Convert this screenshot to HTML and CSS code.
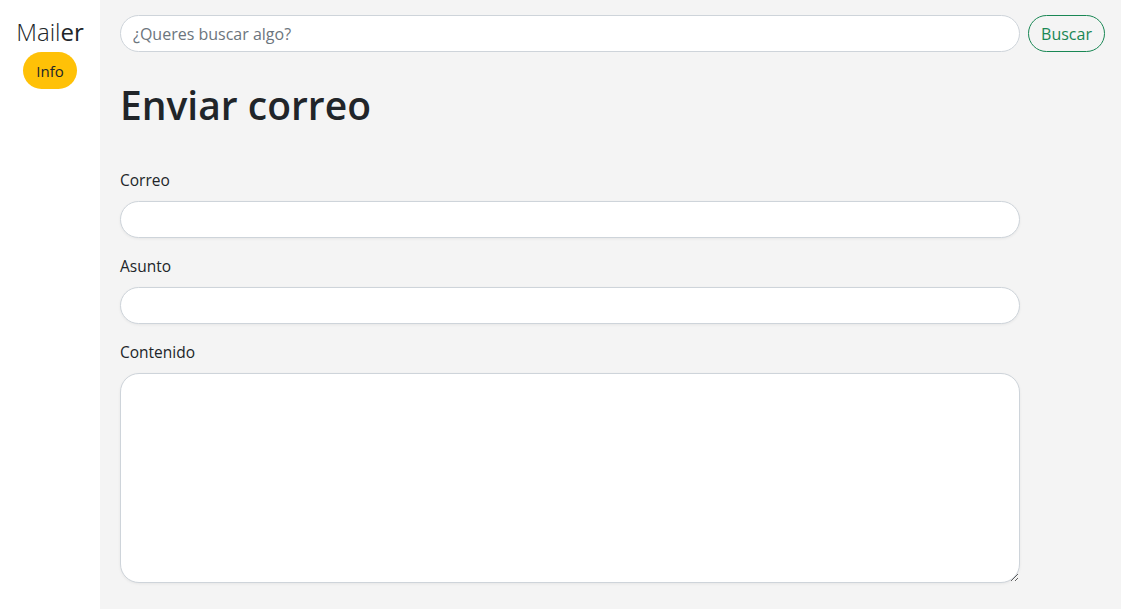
FILE: index.html
```html
<!DOCTYPE html>
<html lang="es">
<head>
<meta charset="utf-8">
<title>Mailer</title>
<link rel="stylesheet" href="styles.css">
</head>
<body>
<div class="app">
  <aside class="sidebar">
    <div class="brand">Mail<b>er</b></div>
    <span class="badge">Info</span>
  </aside>
  <main class="main">
    <form class="search">
      <input class="search-input" type="text" placeholder="¿Queres buscar algo?">
      <button class="btn-outline" type="button">Buscar</button>
    </form>
    <h1 class="title">Enviar correo</h1>
    <div class="field">
      <label class="label">Correo</label>
      <input class="control" type="text">
    </div>
    <div class="field">
      <label class="label">Asunto</label>
      <input class="control" type="text">
    </div>
    <div class="field">
      <label class="label">Contenido</label>
      <textarea class="control area"></textarea>
    </div>
  </main>
</div>
</body>
</html>
```
FILE: styles.css
```css
* { box-sizing: border-box; }
html, body { margin: 0; height: 100%; }
body {
  font-family: "Open Sans", Lato, sans-serif;
  color: #212529;
  background: #f4f4f4;
}
.app { display: flex; min-height: 100%; }
.sidebar {
  width: 100px;
  flex: 0 0 100px;
  background: #fff;
  display: flex;
  flex-direction: column;
  align-items: center;
  padding-top: 17px;
}
.brand {
  font-size: 24px;
  font-weight: 300;
  line-height: 30px;
  color: #212529;
}
.brand b { font-weight: 400; }
.badge {
  margin-top: 5px;
  width: 54px;
  height: 37px;
  border-radius: 19px;
  background: #ffc107;
  display: flex;
  align-items: center;
  justify-content: center;
  font-size: 15px;
  font-weight: 400;
  color: #212529;
}
.main {
  flex: 1;
  padding: 15px 16px 0 20px;
}
.search { display: flex; gap: 8px; }
.search-input {
  width: 900px;
  height: 37px;
  border: 1px solid #ced4da;
  border-radius: 19px;
  background: #fff;
  padding: 0 12px;
  font-family: inherit;
  font-size: 16px;
  font-weight: 400;
}
.search-input::placeholder { color: #6c757d; }
.btn-outline {
  width: 77px;
  height: 37px;
  border: 1px solid #198754;
  border-radius: 19px;
  background: transparent;
  color: #198754;
  font-family: inherit;
  font-size: 16px;
  font-weight: 400;
  padding: 0;
}
.title {
  margin: 29px 0 39px;
  font-size: 39px;
  line-height: 48px;
  font-weight: 600;
  color: #212529;
}
.field { margin-bottom: 16px; width: 900px; }
.label {
  display: block;
  font-size: 15.5px;
  line-height: 24px;
  font-weight: 400;
  margin-bottom: 9px;
}
.control {
  display: block;
  width: 900px;
  height: 37px;
  border: 1px solid #ced4da;
  border-radius: 19px;
  background: #fff;
  font-family: inherit;
  font-size: 15px;
  padding: 6px 12px;
  box-shadow: 0 1px 3px rgba(0,0,0,0.06);
}
.area { height: 210px; resize: vertical; }
```
